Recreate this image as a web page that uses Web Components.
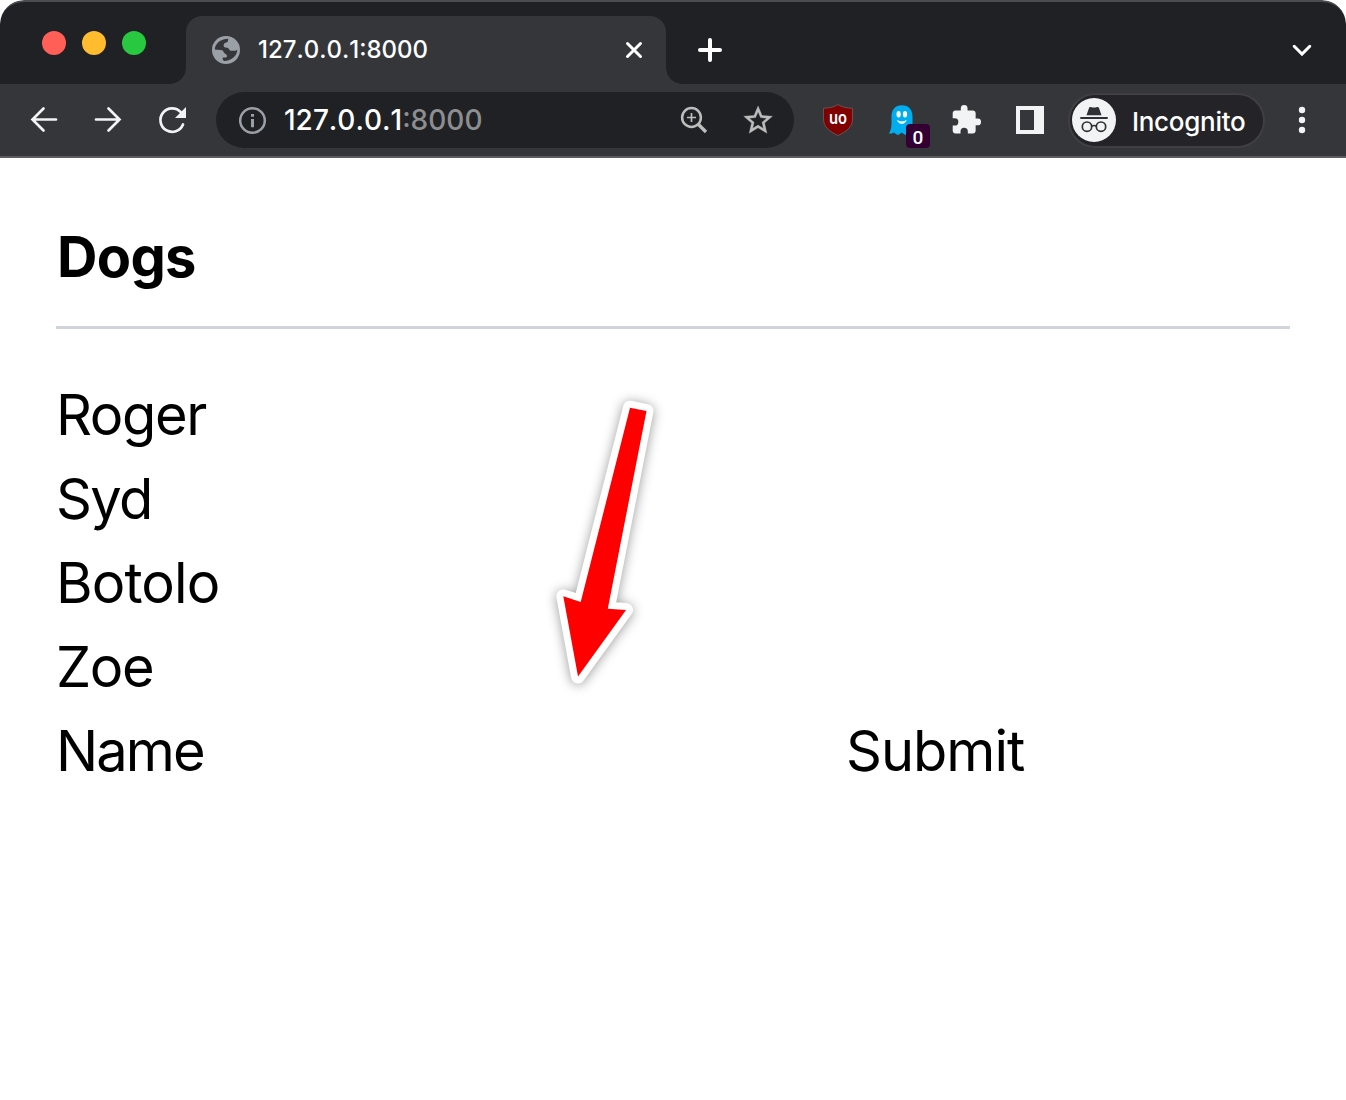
<!DOCTYPE html>
<html lang="en">
<head>
<meta charset="utf-8">
<title>127.0.0.1:8000</title>
<style>
    body {
        margin: 0;
        background: #fff;
        font-family: Inter, "Liberation Sans", sans-serif;
    }
</style>
</head>
<body>
<browser-window>
    <tab-strip slot="chrome"><browser-tab>127.0.0.1:8000</browser-tab></tab-strip>
    <tool-bar slot="chrome"></tool-bar>
    <dog-list>
        <span slot="title">Dogs</span>
        <dog-row>Roger</dog-row>
        <dog-row style="--tracking: -1.7px">Syd</dog-row>
        <dog-row style="--tracking: -.9px">Botolo</dog-row>
        <dog-row>Zoe</dog-row>
        <dog-form></dog-form>
    </dog-list>
    <red-arrow></red-arrow>
</browser-window>

<script>
const define = (name, html) => {
    const template = document.createElement('template');
    template.innerHTML = html;

    customElements.define(name, class extends HTMLElement {
        constructor() {
            super();
            this.attachShadow({ mode: 'open' });
            this.shadowRoot.appendChild(template.content.cloneNode(true));
        }
    });
};

// every icon is drawn in a 32 x 32 box
const icons = {
    back: '<path d="M28 15.500H4.500M15.500 4.500 4.500 15.500 15.500 26.500" fill="none" stroke="#f1f3f4" stroke-width="2.700" stroke-linecap="round"/>',
    forward: '<path d="M4 15.500h23.500M16.500 4.500l11 11-11 11" fill="none" stroke="#f1f3f4" stroke-width="2.700" stroke-linecap="round"/>',
    reload: '<path d="M27 20.500A11.700 11.700 0 1 1 24.800 8.200" fill="none" stroke="#f1f3f4" stroke-width="2.700" stroke-linecap="round"/><path d="M30 3v11H19z" fill="#f1f3f4"/>',
    info: '<circle cx="16.500" cy="16.500" r="12.300" fill="none" stroke="#9aa0a6" stroke-width="2.500"/><path d="M15 10h3v2.700h-3zM15 15h3v8.300h-3z" fill="#9aa0a6"/>',
    zoom: '<circle cx="13.500" cy="13.500" r="9.400" fill="none" stroke="#bdbdbd" stroke-width="2.500"/><path d="M9 13.500h9M13.500 9v9" stroke="#bdbdbd" stroke-width="1.700"/><path d="m20 20 8 8" stroke="#bdbdbd" stroke-width="3.300"/>',
    star: '<path transform="translate(-1.100 -.9) scale(1.430)" fill="#bdbdbd" stroke="#bdbdbd" stroke-width=".25" d="M22 9.240l-7.190-.62L12 2 9.190 8.630 2 9.240l5.460 4.730L5.820 21 12 17.270 18.180 21l-1.630-7.030L22 9.240zM12 15.400l-3.760 2.270 1-4.280-3.320-2.880 4.380-.38L12 6.100l1.710 4.040 4.380.38-3.320 2.880 1 4.280L12 15.400z"/>',
    shield: '<path d="M16 .5C12.500 3.200 7 4 1.500 4.300V15c0 8.500 6.500 12.500 14.500 16.500C24 27.500 30.500 23.500 30.500 15V4.300C25 4 19.500 3.200 16 .5z" fill="#800000" stroke="#6c5557" stroke-width=".9"/><text x="7" y="20" textLength="18" lengthAdjust="spacingAndGlyphs" font-family="Inter, sans-serif" font-weight="600" font-size="17.500" fill="#fff">uo</text>',
    ghost: '<path d="M15.900 1.300C9 1.300 5.500 6 5.500 12.500v7c0 4-.8 7-2.500 9.800 2 .7 3.400.2 5-.8 1.300 1.200 2.300 2 4 2.500 1.300-.5 2.300-1.500 3.500-2.500l4 2.500 7-3V12.500C26.500 6 22.800 1.300 15.900 1.300z" fill="#00aef0"/><ellipse cx="12.600" cy="10.200" rx="2.100" ry="3.300" fill="#fff"/><ellipse cx="19" cy="10.200" rx="2.100" ry="3.300" fill="#fff"/><path d="M11.500 16.500c1.300 4 7.300 4 8.700 0-2.200 1.700-6.500 1.700-8.700 0z" fill="#fff" stroke="#fff" stroke-width=".7"/>',
    puzzle: '<path transform="translate(0 -.3) scale(1.350)" fill="#f1f3f4" d="M20.500 11H19V7c0-1.100-.9-2-2-2h-4V3.500a2.500 2.500 0 0 0-5 0V5H4c-1.100 0-2 .9-2 2v3.800h1.500a2.700 2.700 0 0 1 0 5.400H2V20c0 1.100.9 2 2 2h3.800v-1.500a2.700 2.700 0 0 1 5.400 0V22H17c1.100 0 2-.9 2-2v-4h1.500a2.500 2.500 0 0 0 0-5z"/>',
    panel: '<path fill="#f1f3f4" fill-rule="evenodd" d="M2 2h28v28H2zM6 6v20h14V6z"/>',
    dots: '<g fill="#f1f3f4"><circle cx="16" cy="6" r="3.200"/><circle cx="16" cy="16" r="3.200"/><circle cx="16" cy="26" r="3.200"/></g>',
    globe: '<circle cx="16" cy="16" r="14" fill="#9aa0a6"/><path transform="translate(2 2)" fill="#35363a" d="M2.800 13.500C3 8 8 2.800 16.300 2.700l-.5 3-3.300 1.500c-1.300 1.500-1 3.300 0 4.100l3.500.7 2.300 2.700h5.300l1.700-.9c0 6-6 11.200-13.300 11.200l-1.300-1.500v-2.100h3.500l.8-1-.2-1.500-2.500-1.900-1.800-2.700z"/>',
    close: '<path d="m9.500 9.500 13 13M22.500 9.500l-13 13" stroke="#fff" stroke-width="3" stroke-linecap="round"/>',
    plus: '<path d="M16 6v20M6 16h20" stroke="#fff" stroke-width="4" stroke-linecap="round"/>',
    chevron: '<path d="m8.200 12.300 7.800 7.800 7.800-7.800" fill="none" stroke="#fff" stroke-width="3" stroke-linecap="round"/>'
};

class UiIcon extends HTMLElement {
    constructor() {
        super();
        this.attachShadow({ mode: 'open' });
    }

    connectedCallback() {
        this.shadowRoot.innerHTML = `
            <style>
                :host { display: block; flex: none; width: 32px; height: 32px; }
                svg { display: block; }
            </style>
            <svg width="32" height="32" viewBox="0 0 32 32">${icons[this.getAttribute('name')]}</svg>
        `;
    }
}

customElements.define('ui-icon', UiIcon);

define('browser-window', `
<style>
    :host {
        display: block;
        position: relative;
        height: 1100px;
        overflow: hidden;
        background: #fff;
        border-radius: 24px 24px 0 0;
    }
</style>
<slot name="chrome"></slot>
<slot></slot>
`);

define('tab-strip', `
<style>
    :host {
        display: flex;
        box-sizing: border-box;
        height: 84px;
        padding: 14px 28px 0 42px;
        background: #202124;
        border-top: 2px solid #4a4c4f;
        border-radius: 24px 24px 0 0;
    }

    .lights {
        display: flex;
        gap: 16px;
        width: 144px;
        padding-top: 15px;
    }

    .lights i {
        width: 24px;
        height: 24px;
        border-radius: 50%;
        background: #ff5f57;
    }

    .lights i:nth-child(2) { background: #febc2e; }
    .lights i:nth-child(3) { background: #28c840; }

    ui-icon { margin-top: 18px; }
    .plus { margin-left: 28px; }
    .chevron { margin-left: auto; }
</style>
<div class="lights"><i></i><i></i><i></i></div>
<slot></slot>
<ui-icon class="plus" name="plus"></ui-icon>
<ui-icon class="chevron" name="chevron"></ui-icon>
`);

define('browser-tab', `
<style>
    :host {
        display: flex;
        position: relative;
        box-sizing: border-box;
        width: 480px;
        height: 68px;
        padding: 0 16px 0 24px;
        align-items: center;
        background: #35363a;
        border-radius: 16px 16px 0 0;
        color: #fff;
        font-size: 24px;
    }

    /* the curved feet of the tab */
    :host::before,
    :host::after {
        content: "";
        position: absolute;
        bottom: 0;
        left: -16px;
        width: 16px;
        height: 16px;
        background: radial-gradient(circle at 0 0, transparent 15.5px, #35363a 16px);
    }

    :host::after {
        left: 100%;
        background: radial-gradient(circle at 100% 0, transparent 15.5px, #35363a 16px);
    }

    span {
        flex: 1;
        margin-left: 16px;
        padding-bottom: 1px;
        font-weight: 450;
        font-kerning: none;
    }
</style>
<ui-icon name="globe"></ui-icon>
<span><slot></slot></span>
<ui-icon name="close"></ui-icon>
`);

define('tool-bar', `
<style>
    :host {
        display: flex;
        box-sizing: border-box;
        height: 74px;
        padding: 0 28px;
        align-items: center;
        background: #35363a;
        border-bottom: 2px solid #5c5b60;
    }

    nav,
    .extensions {
        display: flex;
        gap: 32px;
    }

    address-bar { margin: 0 28px; }
    incognito-chip { margin: 0 21px 0 22px; }
</style>
<nav>
    <ui-icon name="back"></ui-icon>
    <ui-icon name="forward"></ui-icon>
    <ui-icon name="reload"></ui-icon>
</nav>
<address-bar>127.0.0.1<span slot="port">:8000</span></address-bar>
<div class="extensions">
    <ui-icon name="shield"></ui-icon>
    <count-badge>0</count-badge>
    <ui-icon name="puzzle"></ui-icon>
    <ui-icon name="panel"></ui-icon>
</div>
<incognito-chip>Incognito</incognito-chip>
<ui-icon name="dots"></ui-icon>
`);

define('address-bar', `
<style>
    :host {
        display: flex;
        box-sizing: border-box;
        flex: none;
        width: 578px;
        height: 56px;
        padding: 0 20px;
        align-items: center;
        background: #202124;
        border-radius: 28px;
        color: #fff;
        font-size: 28px;
    }

    p {
        flex: 1;
        margin: 0 0 0 16px;
        font-weight: 450;
        font-kerning: none;
    }

    p span { color: #8d8e90; }
    .star { margin-left: 32px; }
</style>
<ui-icon name="info"></ui-icon>
<p><slot></slot><span><slot name="port"></slot></span></p>
<ui-icon name="zoom"></ui-icon>
<ui-icon class="star" name="star"></ui-icon>
`);

define('count-badge', `
<style>
    :host {
        display: block;
        position: relative;
    }

    b {
        position: absolute;
        left: 20px;
        top: 20px;
        width: 24px;
        height: 24px;
        background: #340034;
        border-radius: 4px;
        color: #fff;
        font: 500 19px/28px Roboto, sans-serif;
        text-align: center;
    }
</style>
<ui-icon name="ghost"></ui-icon>
<b><slot></slot></b>
`);

define('incognito-chip', `
<style>
    :host {
        display: flex;
        box-sizing: border-box;
        flex: none;
        width: 197px;
        height: 55px;
        padding-left: 2px;
        align-items: center;
        background: #242428;
        border: 2px solid #3f3f44;
        border-radius: 28px;
        color: #fff;
        font-size: 26px;
        font-weight: 450;
        letter-spacing: -.3px;
    }

    span {
        margin-left: 16px;
        padding-top: 2px;
    }
</style>
<svg width="44" height="44" viewBox="0 0 44 44">
    <circle cx="22" cy="22" r="22" fill="#f1f3f4"/>
    <path d="M14.500 17.300 17 10q.5-1.300 1.800-.9 3.200 1 6.400 0 1.300-.4 1.800.9l2.500 7.300z" fill="#303134"/>
    <path d="M8.300 20h27.400" stroke="#303134" stroke-width="2"/>
    <g fill="none" stroke="#303134" stroke-width="1.700">
        <circle cx="15" cy="28.700" r="4.700"/>
        <circle cx="29" cy="28.700" r="4.700"/>
        <path d="M19.600 28.200q2.400-1.400 4.800 0"/>
    </g>
</svg>
<span><slot></slot></span>
`);

define('dog-list', `
<style>
    :host {
        display: block;
        padding: 57px 56px 56px;
        color: #000;
        font-size: 56px;
        line-height: 84px;
    }

    h1 {
        margin: 0 0 44px;
        padding-bottom: 27px;
        border-bottom: 3px solid #d1d5db;
        font-size: inherit;
        font-weight: 700;
        letter-spacing: -.7px;
        text-indent: 1px;
    }
</style>
<h1><slot name="title"></slot></h1>
<slot></slot>
`);

define('dog-row', `
<style>
    :host {
        display: block;
        font-weight: 430;
        letter-spacing: var(--tracking, -1.4px);
    }
</style>
<slot></slot>
`);

define('dog-form', `
<style>
    :host {
        display: grid;
        grid-template-columns: 790px 1fr;
        font-weight: 430;
    }

    .name { letter-spacing: -1.9px; }
    .submit { letter-spacing: -1px; }
</style>
<span class="name">Name</span>
<span class="submit">Submit</span>
`);

define('red-arrow', `
<style>
    :host {
        display: block;
        position: absolute;
        left: 530px;
        top: 380px;
    }

    svg {
        display: block;
        filter: drop-shadow(0 1px 6px rgba(0, 0, 0, .4));
    }
</style>
<svg width="150" height="320" viewBox="530 380 150 320">
    <path d="M630 407.700 646.500 411 607.800 608.700 626 610 578 676.500 563.300 596.300 580.700 602z" fill="#fff" stroke="#fff" stroke-width="14" stroke-linejoin="round"/>
    <path d="M630 407.700 646.500 411 607.800 608.700 626 610 578 676.500 563.300 596.300 580.700 602z" fill="#f00"/>
</svg>
`);
</script>
</body>
</html>
